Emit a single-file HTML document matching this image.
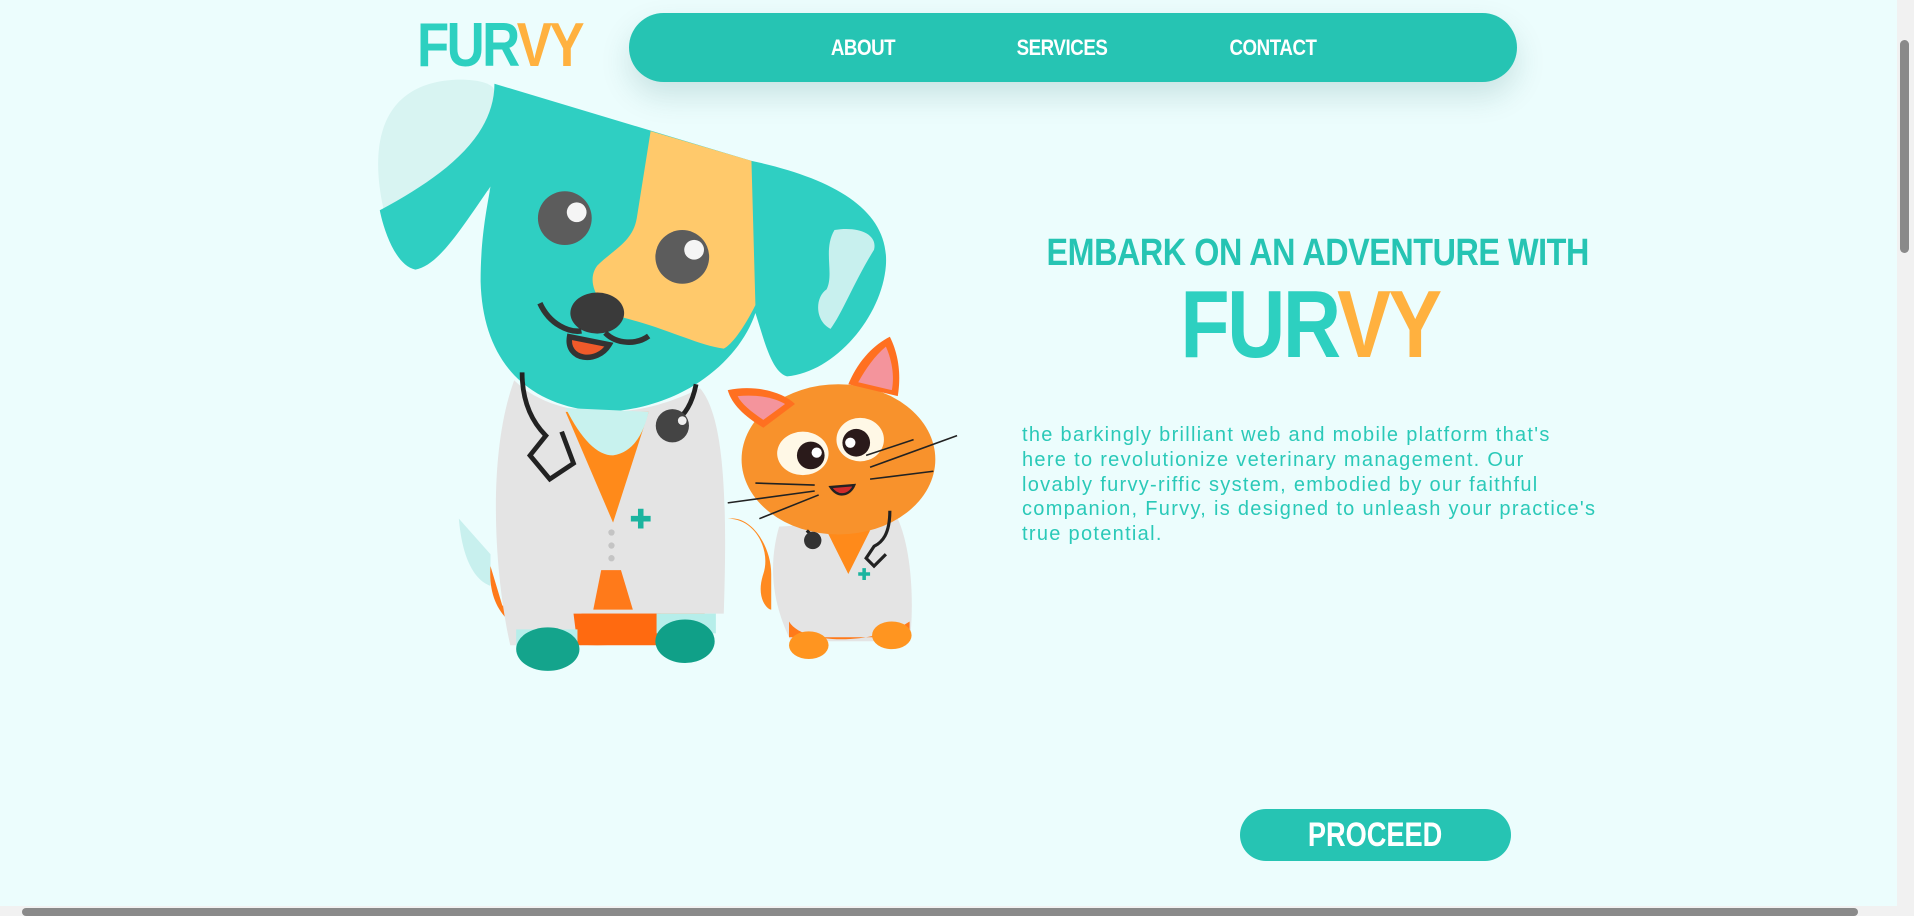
<!DOCTYPE html>
<html><head><meta charset="utf-8"><style>
html,body{margin:0;padding:0;width:1914px;height:916px;overflow:hidden;background:#ecfdfd;font-family:"Liberation Sans",sans-serif}
.abs{position:absolute}
.nav{left:629px;top:13px;width:888px;height:69px;border-radius:35px;background:#26c4b3;box-shadow:0 14px 30px rgba(0,80,80,.15)}
.nav span{position:absolute;top:22px;color:#fff;font-weight:bold;font-size:22px;transform:translateX(-50%) scaleX(.85);letter-spacing:-.5px}
.logo{left:417px;top:10px;font-size:62px;font-weight:bold;letter-spacing:-3px;transform:scaleX(.85);transform-origin:left}
.t{color:#2dd0c0}.o{color:#ffb13f}
h1{position:absolute;left:1000px;width:620px;top:232px;margin:0;text-align:center;color:#26c4b3;font-size:38px;font-weight:bold;white-space:nowrap;transform:scaleX(.85);letter-spacing:-.5px}
.big{left:1000px;width:620px;top:270px;text-align:center;font-size:96px;font-weight:bold;letter-spacing:-3px;transform:scaleX(.84);white-space:nowrap}
p{position:absolute;left:1022px;top:423px;width:578px;margin:0;color:#2ac9b8;font-size:20px;line-height:24.8px;letter-spacing:1.3px}
.btn{left:1240px;top:809px;width:271px;height:52px;border-radius:26px;background:#26c4b3;color:#fff;font-weight:bold;font-size:34px;text-align:center;line-height:52px}
.btn span{display:inline-block;transform:scaleX(.8)}
</style></head><body>
<div class="abs logo"><span class="t">FUR</span><span class="o">VY</span></div>
<div class="abs nav"><span style="left:234px">ABOUT</span><span style="left:433px">SERVICES</span><span style="left:644px">CONTACT</span></div>
<svg class="abs" style="left:360px;top:60px" width="620" height="620" viewBox="0 0 1568 1568">
<path d="M60 380 C20 200 60 60 240 50 C300 48 340 60 340 80 L330 330 Z" fill="#d8f4f2"/>
<path d="M340 60 L990 255 C1200 300 1340 380 1330 520 C1320 650 1200 790 1080 800 C1040 790 1020 700 1000 640 C960 760 820 880 620 890 C420 880 310 760 305 560 C305 450 320 380 330 320 C260 420 200 520 140 530 C90 520 60 430 50 380 C200 300 340 200 340 60 Z" fill="#2fcfc2"/>
<path d="M735 180 L990 255 L1000 620 C970 680 940 720 920 730 C850 720 780 680 660 650 C600 620 570 560 600 520 C640 480 690 460 700 400 Z" fill="#ffc96b"/>
<path d="M1200 430 C1260 420 1310 440 1300 480 C1250 560 1220 640 1190 680 C1150 660 1150 600 1180 580 C1200 540 1170 480 1200 430Z" fill="#c8f0ee"/>
<circle cx="518" cy="400" r="68" fill="#5c5c5c"/><circle cx="548" cy="385" r="25" fill="#f5f5f5"/>
<circle cx="815" cy="498" r="68" fill="#5c5c5c"/><circle cx="845" cy="480" r="25" fill="#f5f5f5"/>
<path d="M530 700 C520 760 600 770 630 720 Z" fill="#f05a2a" stroke="#333" stroke-width="14"/>
<ellipse cx="600" cy="640" rx="68" ry="52" fill="#3a3a3a"/>
<path d="M455 615 C480 670 530 690 560 685 M620 690 C650 720 700 720 730 698" stroke="#333" stroke-width="14" fill="none"/>
<path d="M250 1160 C260 1280 300 1320 330 1330 L330 1250 Z" fill="#c8f0ee"/>
<path d="M330 1280 C320 1420 420 1480 600 1480 C800 1480 900 1420 920 1300 L900 1380 L360 1380Z" fill="#ff7a1a"/>
<path d="M390 810 C450 870 540 890 620 890 C720 890 800 860 860 830 C920 900 930 1100 920 1400 L560 1400 L560 1480 L380 1480 C340 1300 320 1000 390 810Z" fill="#e4e4e4"/>
<path d="M540 1400 L760 1400 L760 1480 L550 1480 Z" fill="#ff6a10"/>
<path d="M520 890 L730 890 L640 1170 Z" fill="#ff8a1a"/>
<path d="M520 880 C560 960 600 1000 640 1000 C700 990 720 930 730 890 Z" fill="#c8f2ee"/>
<path d="M610 1290 L660 1290 L690 1390 L590 1390Z" fill="#ff7a1a"/>
<path d="M685 1160 h50 M710 1135 v50" stroke="#1bb49f" stroke-width="14"/>
<circle cx="636" cy="1195" r="8" fill="#c4c4c4"/><circle cx="636" cy="1228" r="8" fill="#c4c4c4"/><circle cx="636" cy="1260" r="8" fill="#c4c4c4"/>
<path d="M410 790 C410 870 440 920 470 950 L430 1000 L480 1060 L540 1020 L510 940 M850 820 C840 870 820 900 800 910" stroke="#222" stroke-width="12" fill="none"/>
<circle cx="790" cy="925" r="42" fill="#444"/><circle cx="815" cy="912" r="11" fill="#eee"/>
<path d="M395 1440 L550 1440 L550 1490 L395 1490Z" fill="#b6eeea"/><path d="M750 1400 L900 1400 L900 1450 L750 1450Z" fill="#b6eeea"/>
<ellipse cx="475" cy="1490" rx="80" ry="55" fill="#14a48c"/><ellipse cx="822" cy="1470" rx="75" ry="55" fill="#10a088"/>
<path d="M930 1160 C1000 1160 1040 1240 1020 1300 C1000 1360 1030 1390 1040 1390 L1040 1300 C1040 1230 990 1150 930 1160Z" fill="#ff8a20"/>
<path d="M1060 1180 L1360 1160 C1400 1250 1400 1400 1390 1470 L1090 1470 C1030 1350 1040 1250 1060 1180Z" fill="#e4e4e4"/>
<path d="M1085 1420 C1120 1480 1300 1480 1390 1420 L1390 1460 L1085 1460Z" fill="#ff7a1a"/>
<path d="M1180 1190 L1290 1190 L1235 1300 Z" fill="#ff8a1a"/>
<path d="M1260 1300 h30 M1275 1285 v30" stroke="#1bb49f" stroke-width="9"/>
<ellipse cx="1135" cy="1480" rx="50" ry="35" fill="#ff9520"/><ellipse cx="1345" cy="1455" rx="50" ry="35" fill="#ff9520"/>
<ellipse cx="1210" cy="1010" rx="245" ry="190" fill="#f8922c"/>
<path d="M930 835 C1000 820 1070 840 1100 870 L1020 930 C970 900 940 870 930 835Z" fill="#ff7020"/>
<path d="M955 850 C1010 845 1050 855 1075 870 L1020 910 C990 890 965 870 955 850Z" fill="#f4949c"/>
<path d="M1340 700 C1370 760 1365 820 1360 850 L1235 820 C1260 760 1300 720 1340 700Z" fill="#ff7020"/>
<path d="M1330 725 C1350 770 1350 810 1345 835 L1260 815 C1280 780 1300 750 1330 725Z" fill="#f4949c"/>
<ellipse cx="1120" cy="995" rx="65" ry="55" fill="#fff8e6"/><circle cx="1140" cy="1000" r="35" fill="#2a1a1a"/><circle cx="1155" cy="993" r="13" fill="#fff"/>
<ellipse cx="1265" cy="960" rx="60" ry="55" fill="#fff8e6"/><circle cx="1255" cy="968" r="35" fill="#2a1a1a"/><circle cx="1240" cy="968" r="13" fill="#fff"/>
<path d="M1190 1080 C1210 1110 1240 1100 1250 1075 Z" fill="#d02a2a" stroke="#222" stroke-width="6"/>
<path d="M1000 1070 L1150 1075 M930 1120 L1150 1090 M1010 1160 L1160 1100 M1290 1030 L1510 950 M1290 1060 L1450 1040 M1280 1000 L1400 960" stroke="#222" stroke-width="4"/>
<path d="M1130 1190 C1140 1200 1150 1210 1160 1215 M1340 1140 C1340 1200 1320 1220 1300 1230 L1280 1260 L1300 1280 L1330 1250" stroke="#222" stroke-width="8" fill="none"/>
<circle cx="1145" cy="1215" r="22" fill="#333"/>
</svg>
<h1>EMBARK ON AN ADVENTURE WITH</h1>
<div class="abs big"><span class="t">FUR</span><span class="o">VY</span></div>
<p>the barkingly brilliant web and mobile platform that's here to revolutionize veterinary management. Our lovably furvy&#8209;riffic system, embodied by our faithful companion, Furvy, is designed to unleash your practice's true potential.</p>
<div class="abs btn"><span>PROCEED</span></div>
<div class="abs" style="left:1897px;top:0;width:17px;height:916px;background:#f1f1f1"></div>
<div class="abs" style="left:1900px;top:40px;width:9px;height:213px;border-radius:5px;background:#8a8a8a"></div>
<div class="abs" style="left:0;top:906px;width:1897px;height:10px;background:#f1f1f1"></div>
<div class="abs" style="left:22px;top:908px;width:1836px;height:8px;border-radius:4px;background:#8a8a8a"></div>
</body></html>
